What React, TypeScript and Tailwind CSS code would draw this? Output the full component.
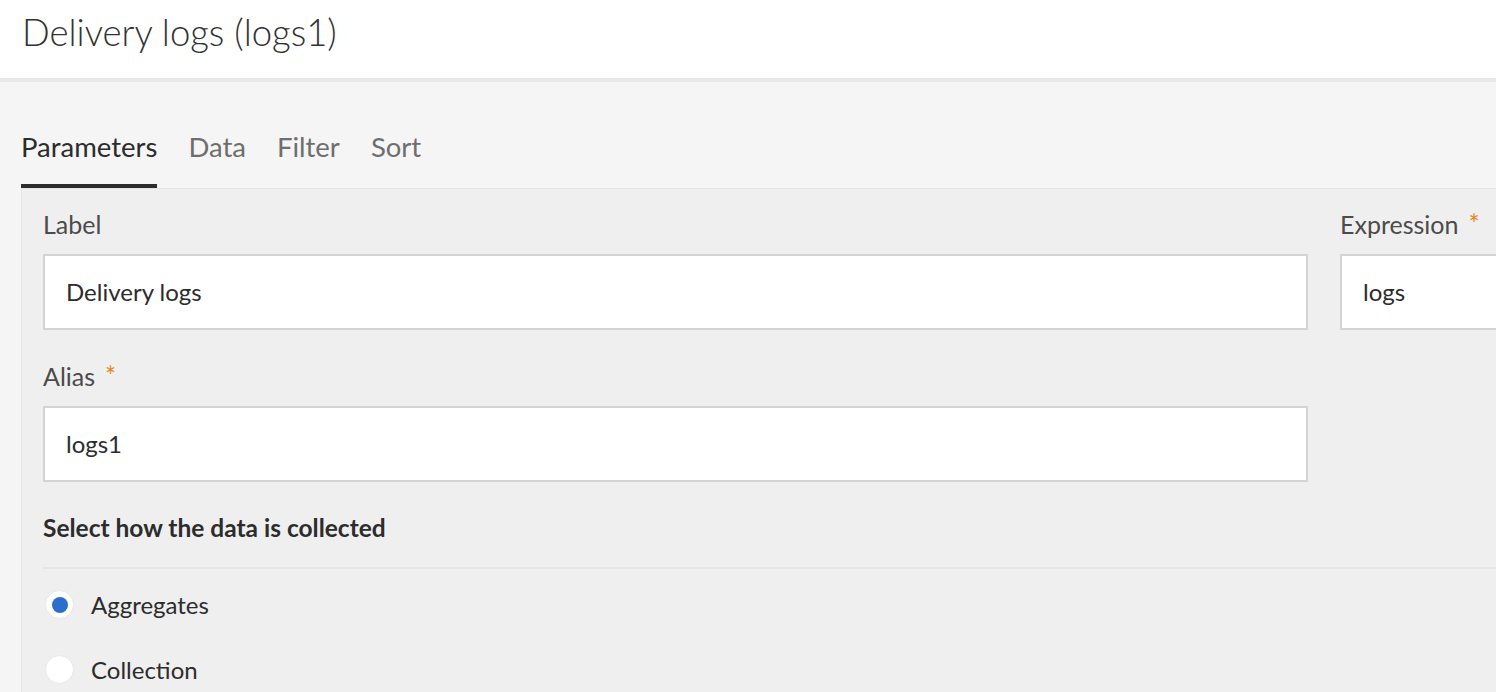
import React from "react";

function Field({ label, required, value }: { label: string; required?: boolean; value?: string }) {
  return (
    <div className="flex flex-col">
      <div className="flex items-center text-[25px] leading-[28px] text-[#4b4b4b] mb-[16px]">
        <span>{label}</span>
        {required && <span className="ml-[10px] text-[26px] text-[#e68619]">*</span>}
      </div>
      <div className="h-[76px] bg-white border-2 border-[#d3d3d3] flex items-center pl-[21px] text-[24px] text-[#2c2c2c]">
        {value}
      </div>
    </div>
  );
}

function Radio({ checked, label }: { checked?: boolean; label: string }) {
  return (
    <div className="h-[65px] flex items-center">
      <div className="ml-[2px] w-[29px] h-[29px] rounded-full bg-white border border-[#e8e8e8] flex items-center justify-center">
        {checked && <div className="w-[16px] h-[16px] rounded-full bg-[#2c6ecb]" />}
      </div>
      <span className="ml-[17px] text-[24px] text-[#2c2c2c]">{label}</span>
    </div>
  );
}

export default function App() {
  return (
    <div
      className="w-[1496px] h-[692px] overflow-hidden bg-[#f5f5f5] flex flex-col"
      style={{ fontFamily: "Lato, 'Open Sans', sans-serif" }}
    >
      <div className="h-[82px] shrink-0 bg-white border-b-4 border-[#e8e8e8] flex items-start pl-[22px] pt-[14px]">
        <h1 className="text-[36.5px] font-light text-[#323232] leading-none">Delivery logs (logs1)</h1>
      </div>
      <div className="h-[106px] shrink-0 flex items-end gap-[31px] pl-[21px]">
        {["Parameters", "Data", "Filter", "Sort"].map((t, i) => (
          <div
            key={t}
            className={
              i === 0
                ? "text-[27.5px] leading-[32px] pb-[21px] border-b-4 border-[#2c2c2c] text-[#2c2c2c]"
                : "text-[27.5px] leading-[32px] pb-[21px] border-b-4 border-transparent text-[#6e6e6e]"
            }
          >
            {t}
          </div>
        ))}
      </div>
      <div className="ml-[21px] flex-1 bg-[#efefef] border-l border-t border-[#e6e6e6] pl-[21px] pt-[21px] w-[2700px]">
        <div className="grid grid-cols-[1265px_1265px] gap-x-[32px] gap-y-[32px]">
          <Field label="Label" value="Delivery logs" />
          <Field label="Expression" required value="logs" />
          <Field label="Alias" required value="logs1" />
          <div />
        </div>
        <div className="mt-[32px] text-[24.5px] leading-[28px] font-bold text-[#2c2c2c]">
          Select how the data is collected
        </div>
        <div className="mt-[25px] h-[2px] bg-[#e6e6e6]" />
        <div className="mt-[3px] flex flex-col">
          <Radio checked label="Aggregates" />
          <Radio label="Collection" />
        </div>
      </div>
    </div>
  );
}
